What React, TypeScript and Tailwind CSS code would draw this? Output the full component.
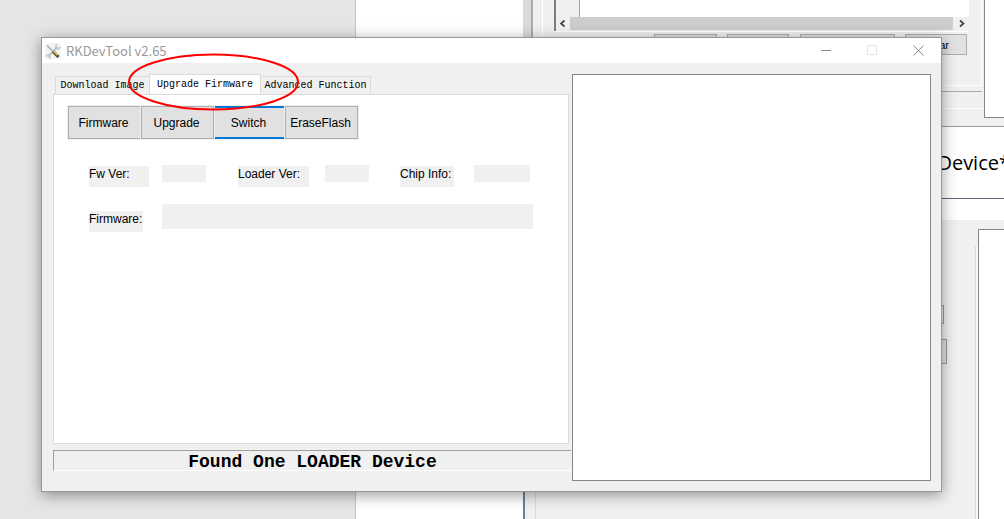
import { useState } from "react";

const tabs = [
  { name: "Download Image", width: "w-[94px]" },
  { name: "Upgrade Firmware", width: "w-[112px]" },
  { name: "Advanced Function", width: "w-[110px]" },
];

function ToolIcon() {
  return (
    <svg viewBox="0 0 16 16" className="h-4 w-4 shrink-0" aria-hidden="true">
      <rect width="16" height="16" fill="#f1f3f5" />
      <path d="M3 13.5 12.5 4" stroke="#b4bfc8" strokeWidth="2" />
      <path d="M11.2 1 11 4.8l2 1.2L15.5 4" fill="none" stroke="#c0cad2" strokeWidth="1.6" />
      <path d="M.8 13.5 3 12l2 1.6L4.6 16" fill="none" stroke="#c0cad2" strokeWidth="1.6" />
      <path d="M2 2.5 8.5 9" stroke="#a0a8ae" strokeWidth="1.3" />
      <path d="M8 8.5 13.5 14" stroke="#4a4438" strokeWidth="3" />
      <path d="M8.2 8 12.6 12.2" stroke="#e9b93c" strokeWidth="1.7" />
    </svg>
  );
}

function BackButton({ className, text = "" }: { className: string; text?: string }) {
  return (
    <button
      type="button"
      aria-label={text ? undefined : "Action"}
      className={`h-[21px] border border-[#adadad] bg-[#e1e1e1] pr-[17px] text-right text-[11px] leading-[18px] ${className}`}
    >
      {text}
    </button>
  );
}

function BackgroundWindows() {
  return (
    <div className="flex h-full">
      <div className="w-[356px] shrink-0 border-r border-[#c3c3c3] bg-[#e5e5e5]" />
      <div className="w-[167px] shrink-0 bg-white" />
      <div className="flex min-w-0 flex-1 flex-col bg-[#f0f0f0]">
        <div className="flex h-[127px] shrink-0 border-b border-[#9b9b9b]">
          <div className="w-[10px] shrink-0 border-r-2 border-[#ababab] bg-[#dadada]" />
          <div className="flex min-w-0 flex-1 flex-col">
            <div className="ml-[9px] h-[86px] border-x border-b border-white pl-[11px] pr-[12px]">
              <div className="flex h-[31px] flex-col border-l-2 border-[#7c7c7c]">
                <div className="flex h-[17px]">
                  <div className="w-[24px] border-r border-[#a0a0a0]" />
                  <div className="flex-1 bg-white" />
                </div>
                <div className="flex h-[13px] items-center">
                  <svg viewBox="0 0 14 13" className="h-[13px] w-[14px]" aria-hidden="true">
                    <path d="M8.5 3.5 5 6.5l3.5 3" fill="none" stroke="#444" strokeWidth="1.7" />
                  </svg>
                  <div className="h-full flex-1 bg-[#cdcdcd]" />
                  <svg viewBox="0 0 16 13" className="h-[13px] w-4" aria-hidden="true">
                    <path d="m7 3.5 3.5 3-3.5 3" fill="none" stroke="#444" strokeWidth="1.7" />
                  </svg>
                </div>
              </div>
              <div className="h-px bg-white" />
              <div className="mt-[2px] flex justify-end pr-[2px]">
                <BackButton className="w-[63px]" />
                <BackButton className="ml-[10px] w-[62px]" />
                <BackButton className="ml-[11px] w-[95px]" />
                <BackButton className="ml-[10px] w-[62px]" text="Clear" />
              </div>
            </div>
            <div className="mt-[5px] h-[18px] border-y border-t-[#aaaaaa] border-b-white" />
          </div>
          <div className="ml-[2px] h-[118px] w-[20px] shrink-0 border-b border-l border-[#828790] bg-white" />
        </div>
        <div className="flex h-[72px] shrink-0 items-center justify-end border-b border-[#5f6875] bg-white font-['Open_Sans','Noto_Sans_CJK_SC',sans-serif] text-[20px]">
          <span className="-mr-[6px]">Device*</span>
        </div>
        <div className="h-[21px] shrink-0 bg-white" />
        <div className="flex min-h-0 flex-1 border-l-2 border-[#688492]">
          <div className="w-[11px] shrink-0 border-r border-[#dadada]" />
          <div className="flex flex-1 flex-col items-end pt-[85px]">
            <div className="mr-[31px] h-[19px] w-[60px] border border-[#999]" />
            <div className="mr-[28px] mt-[15px] h-[25px] w-[80px] border border-[#999] bg-[#e1e1e1]" />
          </div>
          <div className="mt-[26px] w-[3px] border-l border-[#dadada] bg-[#f8f8f8]" />
          <div className="mt-[9px] w-[26px] shrink-0 border-l border-t border-[#828790] bg-white" />
        </div>
      </div>
    </div>
  );
}

function Field({ id, label, labelWidth, valueWidth }: { id: string; label: string; labelWidth: string; valueWidth: string }) {
  return (
    <>
      <label htmlFor={id} className={`mt-px block h-[21px] whitespace-nowrap bg-[#f0f0f0] leading-4 ${labelWidth}`}>
        {label}
      </label>
      <input id={id} readOnly className={`h-[17px] bg-[#f0f0f0] outline-none ${valueWidth}`} />
    </>
  );
}

function TitleBar() {
  return (
    <header className="flex h-[25px] shrink-0 items-center bg-white pl-[3px]">
      <ToolIcon />
      <h1 className="ml-[5px] flex-1 font-['Noto_Sans_CJK_SC',sans-serif] text-[13px] leading-4 text-[#999]">
        RKDevTool v2.65
      </h1>
      <button type="button" aria-label="Minimize" className="flex h-full w-[46px] items-center justify-center">
        <svg viewBox="0 0 11 11" className="h-[11px] w-[11px]">
          <path d="M0 5.5h10" stroke="#888" />
        </svg>
      </button>
      <button type="button" aria-label="Maximize" disabled className="flex h-full w-[46px] items-center justify-center">
        <svg viewBox="0 0 11 11" className="h-[11px] w-[11px]">
          <path d="M.5.5h9v9h-9z" fill="none" stroke="#e6e6e6" />
        </svg>
      </button>
      <button type="button" aria-label="Close" className="flex h-full w-[46px] items-center justify-center">
        <svg viewBox="0 0 11 11" className="h-[11px] w-[11px]">
          <path d="m.5.5 10 10m0-10-10 10" stroke="#888" />
        </svg>
      </button>
    </header>
  );
}

export default function App() {
  const [active, setActive] = useState(1);
  return (
    <div className="relative h-screen overflow-hidden bg-[#f0f0f0] font-['Liberation_Sans',Arial,sans-serif] text-[12px] text-black">
      <BackgroundWindows />
      <main className="absolute bottom-[27px] left-[41px] right-[62px] top-[37px] flex flex-col border border-[#999] bg-[#f0f0f0] shadow-[0_3px_14px_rgba(0,0,0,0.4)]">
        <TitleBar />
        <div className="grid min-h-0 flex-1 grid-cols-[519fr_359fr] pb-[10px] pl-[11px] pr-[10px] pt-[11px]">
          <section className="flex min-w-0 flex-col pb-[10px]">
            <div role="tablist" className="ml-[2px] flex h-[20px] shrink-0 items-end font-['Liberation_Mono',monospace] text-[10px] leading-4">
              {tabs.map((tab, i) => (
                <button
                  key={tab.name}
                  type="button"
                  role="tab"
                  aria-selected={i === active}
                  onClick={() => setActive(i)}
                  className={`whitespace-nowrap border-[#dadada] ${tab.width} ${
                    i === active
                      ? "h-[20px] border-x border-t bg-white"
                      : `h-[18px] border-t bg-[#f0f0f0] ${i === 0 ? "border-l" : "border-r"}`
                  }`}
                >
                  {tab.name}
                </button>
              ))}
            </div>
            <div role="tabpanel" className="mr-[3px] min-h-0 flex-1 border border-[#dadada] bg-white pl-[13px] pt-[10px]">
              <div className="flex w-fit gap-px bg-[#f0f0f0] p-px">
                <button type="button" className="h-[33px] w-[72px] border-y border-l border-[#adadad] bg-[#e1e1e1] pr-[2px]">
                  Firmware
                </button>
                <button type="button" className="h-[33px] w-[73px] border border-[#adadad] bg-[#e1e1e1] pr-[2px]">
                  Upgrade
                </button>
                <button type="button" className="h-[33px] w-[69px] border-y-2 border-[#0078d7] bg-[#e1e1e1] pr-[2px]">
                  Switch
                </button>
                <button type="button" className="h-[33px] w-[73px] border border-[#adadad] bg-[#e1e1e1] pr-[2px]">
                  EraseFlash
                </button>
              </div>
              <div className="ml-[22px] mt-[25px] grid grid-cols-[73px_76px_87px_75px_74px_1fr] grid-rows-[39px_28px] items-start">
                <Field id="fw-ver" label="Fw Ver:" labelWidth="w-[60px]" valueWidth="w-[44px]" />
                <Field id="loader-ver" label="Loader Ver:" labelWidth="w-[71px]" valueWidth="w-[44px]" />
                <Field id="chip-info" label="Chip Info:" labelWidth="w-[54px]" valueWidth="w-[56px]" />
                <label htmlFor="firmware" className="mt-[7px] block h-[21px] w-[54px] whitespace-nowrap bg-[#f0f0f0] leading-4">
                  Firmware:
                </label>
                <input id="firmware" readOnly className="col-span-5 mr-[35px] h-[25px] bg-[#f0f0f0] outline-none" />
              </div>
            </div>
            <p
              role="status"
              className="mr-px mt-[6px] h-[21px] shrink-0 border-b border-l border-t border-b-white border-l-[#a0a0a0] border-t-[#a0a0a0] text-center font-['Liberation_Mono',monospace] text-[18px] font-bold leading-[22px]"
            >
              Found One LOADER Device
            </p>
          </section>
          <textarea readOnly aria-label="Log" className="block h-full w-full resize-none border border-[#828790] bg-white outline-none" />
        </div>
        <svg
          viewBox="0 0 172 58"
          className="pointer-events-none absolute left-[86px] top-[15px] h-[58px] w-[172px]"
          aria-hidden="true"
        >
          <ellipse cx="85.5" cy="29" rx="84.5" ry="27.5" fill="none" stroke="#f00" strokeWidth="2" />
        </svg>
      </main>
    </div>
  );
}
